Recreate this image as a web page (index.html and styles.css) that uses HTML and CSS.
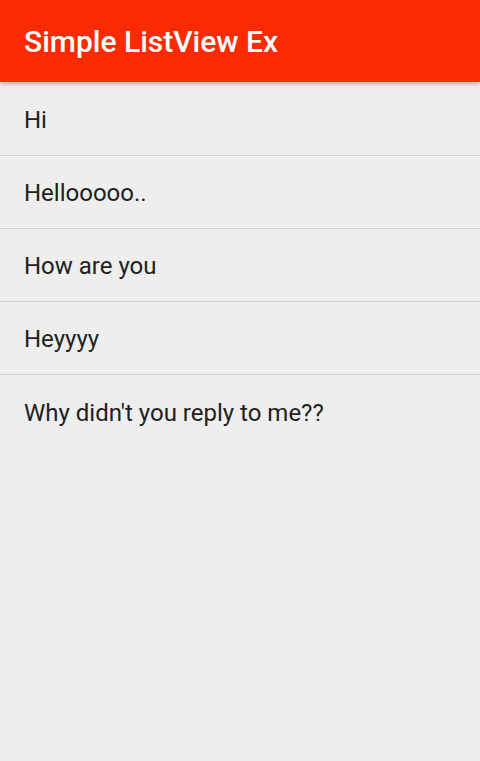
FILE: index.html
```html
<!DOCTYPE html>
<html lang="en">
<head>
  <meta charset="UTF-8">
  <meta name="viewport" content="width=device-width, initial-scale=1.0">
  <title>Simple ListView Ex</title>
  <link rel="stylesheet" href="styles.css">
</head>
<body>
  <header class="app-bar">
    <h1>Simple ListView Ex</h1>
  </header>

  <ul class="list">
    <li>Hi</li>
    <li>Hellooooo..</li>
    <li>How are you</li>
    <li>Heyyyy</li>
    <li>Why didn't you reply to me??</li>
  </ul>
</body>
</html>
```

FILE: styles.css
```css
html, body {
  margin: 0;
  padding: 0;
  height: 100%;
}
body {
  background: #eeeeee;
  font-family: Roboto, "Noto Sans", sans-serif;
  color: #212121;
}
.app-bar {
  background: #fc2a00;
  height: 82px;
  display: flex;
  align-items: center;
  padding: 0 24px;
  box-shadow: 0 2px 4px rgba(0, 0, 0, 0.25);
  position: relative;
}
.app-bar h1 {
  margin: 0;
  color: #ffffff;
  font-size: 30px;
  font-weight: 500;
}
.list {
  list-style: none;
  margin: 0;
  padding: 0;
}
.list li {
  box-sizing: border-box;
  height: 73px;
  display: flex;
  align-items: center;
  padding: 2px 24px 0;
  font-size: 24px;
  border-bottom: 1px solid #d0d0d0;
}
.list li:first-child {
  height: 74px;
}
.list li:last-child {
  border-bottom: none;
}
```
